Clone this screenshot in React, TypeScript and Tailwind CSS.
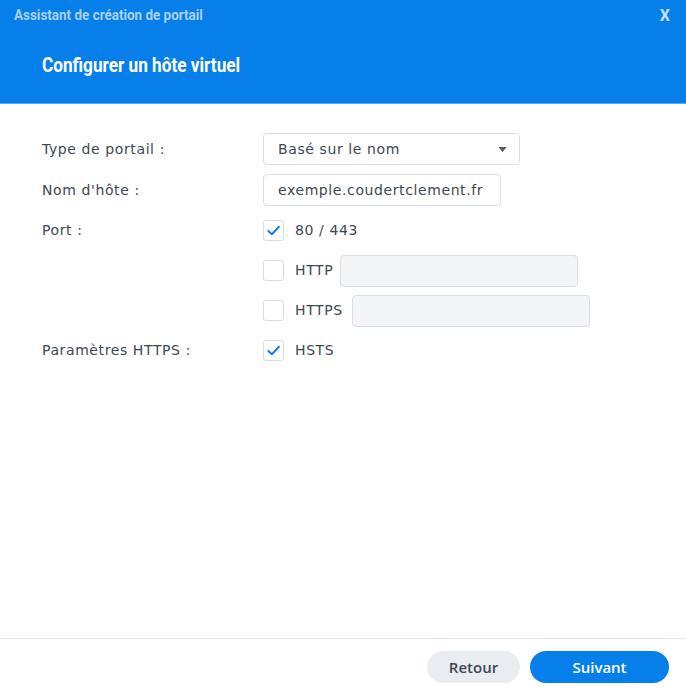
function Check({ checked }: { checked: boolean }) {
  return (
    <span className="flex h-[21px] w-[21px] shrink-0 items-center justify-center rounded-[3px] border border-[#d7dce2] bg-white">
      {checked && (
        <svg viewBox="0 0 16 16" className="h-[15px] w-[15px]" fill="none">
          <path d="M2.5 8.5 L6.2 12 L13.8 4" stroke="#0b7ee8" strokeWidth="2" strokeLinecap="round" strokeLinejoin="round" />
        </svg>
      )}
    </span>
  );
}

const narrow = { fontFamily: 'Roboto, "Liberation Sans", sans-serif' };
const btn = { fontFamily: '"Open Sans", "Noto Sans", sans-serif' };

export default function App() {
  const body = { fontFamily: '"DejaVu Sans", Verdana, sans-serif' };

  return (
    <div className="flex h-[691px] w-[686px] flex-col bg-white" style={body}>
      {/* Header */}
      <div className="h-[104px] shrink-0 border-b border-[#5aa9f2] bg-[#077fea]">
        <div className="flex h-[31px] items-center justify-between pl-[14px] pr-[16px]">
          <span className="inline-block origin-left scale-x-[0.96] text-[14px] font-bold text-[#a9d1f6]" style={narrow}>
            Assistant de création de portail
          </span>
          <span className="text-[16px] font-bold text-[#c6e0f9]" style={narrow}>
            X
          </span>
        </div>
        <div className="pl-[42px] pt-[19px]">
          <span className="inline-block origin-left scale-x-[0.86] text-[20px] font-bold text-white" style={narrow}>
            Configurer un hôte virtuel
          </span>
        </div>
      </div>

      {/* Form */}
      <div className="flex flex-1 flex-col gap-[9px] pl-[42px] pt-[29px] text-[14px] tracking-[0.6px] text-[#3e4852]">
        <div className="flex items-center">
          <div className="w-[221px]">Type de portail :</div>
          <div className="flex h-[32px] w-[257px] items-center justify-between rounded-[4px] border border-[#d9dee4] pl-[14px] pr-[12px]">
            <span>Basé sur le nom</span>
            <svg viewBox="0 0 10 6" className="h-[5px] w-[9px]"><path d="M0 0 H10 L5 6 Z" fill="#555f69" /></svg>
          </div>
        </div>

        <div className="flex items-center">
          <div className="w-[221px]">Nom d'hôte :</div>
          <div className="flex h-[32px] w-[238px] items-center rounded-[4px] border border-[#d9dee4] pl-[14px]">
            exemple.coudertclement.fr
          </div>
        </div>

        <div className="flex h-[31px] items-center">
          <div className="w-[221px]">Port :</div>
          <div className="flex items-center gap-[11px]">
            <Check checked />
            <span>80 / 443</span>
          </div>
        </div>

        <div className="flex h-[31px] items-center">
          <div className="w-[221px]" />
          <div className="flex items-center">
            <Check checked={false} />
            <span className="ml-[11px] mr-[7px]">HTTP</span>
            <div className="h-[32px] w-[238px] rounded-[4px] border border-[#d9dee4] bg-[#f3f5f8]" />
          </div>
        </div>

        <div className="flex h-[31px] items-center">
          <div className="w-[221px]" />
          <div className="flex items-center">
            <Check checked={false} />
            <span className="ml-[11px] mr-[9px]">HTTPS</span>
            <div className="h-[32px] w-[238px] rounded-[4px] border border-[#d9dee4] bg-[#f3f5f8]" />
          </div>
        </div>

        <div className="flex h-[31px] items-center">
          <div className="w-[221px]">Paramètres HTTPS :</div>
          <div className="flex items-center gap-[11px]">
            <Check checked />
            <span>HSTS</span>
          </div>
        </div>
      </div>

      {/* Footer */}
      <div className="flex h-[53px] shrink-0 items-start justify-end gap-[10px] border-t border-[#e3e7ec] pr-[17px] pt-[12px]" style={btn}>
        <button className="h-[32px] w-[93px] rounded-full bg-[#e9edf2] text-[15px] font-semibold text-[#3e4852]">Retour</button>
        <button className="h-[32px] w-[139px] rounded-full bg-[#077fea] text-[15px] font-semibold text-white">Suivant</button>
      </div>
    </div>
  );
}
